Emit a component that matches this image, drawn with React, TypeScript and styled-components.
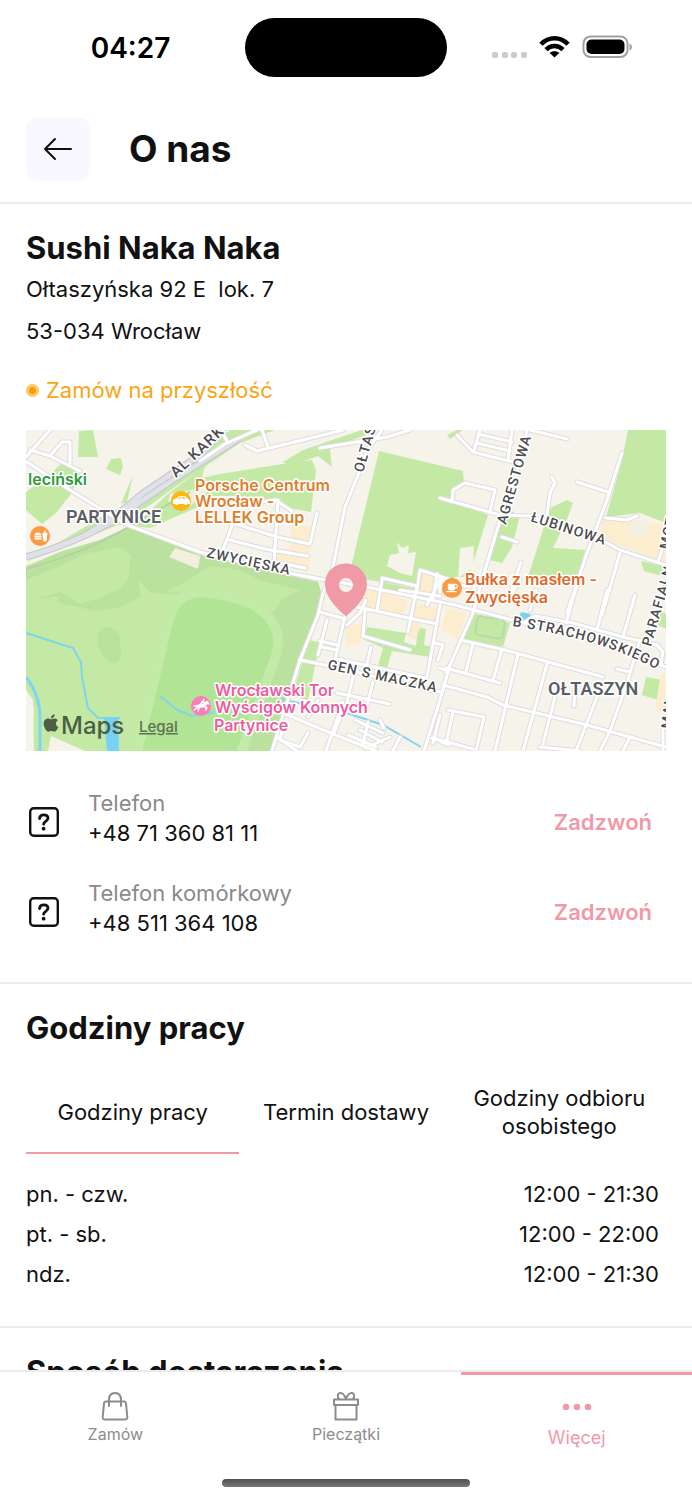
import React, { useState } from 'react';
import styled, { createGlobalStyle } from 'styled-components';
import { FaApple } from 'react-icons/fa';
import { FaBurger, FaMugSaucer } from 'react-icons/fa6';

const contacts = [
    { id: 'phone', label: 'Telefon', number: '+48 71 360 81 11' },
    { id: 'mobile', label: 'Telefon komórkowy', number: '+48 511 364 108' },
];

const hourTabs = ['Godziny pracy', 'Termin dostawy', 'Godziny odbioru osobistego'];

const hours = [
    { days: 'pn. - czw.', time: '12:00 - 21:30' },
    { days: 'pt. - sb.', time: '12:00 - 22:00' },
    { days: 'ndz.', time: '12:00 - 21:30' },
];

const App = () => {
    const [activeTab, setActiveTab] = useState(0);

    return (
        <>
            <GlobalStyle />
            <Screen>
                <StatusBar>
                    <StatusSide>
                        <Clock>04:27</Clock>
                    </StatusSide>
                    <Island />
                    <StatusSide>
                        <StatusIcons />
                    </StatusSide>
                </StatusBar>
                <Header>
                    <BackButton type="button" aria-label="Wstecz">
                        <svg width="30" height="24" viewBox="0 0 30 24" fill="none" stroke="#111" strokeWidth="2" strokeLinecap="round" strokeLinejoin="round">
                            <path d="M28 12H2M12 2L2 12L12 22" />
                        </svg>
                    </BackButton>
                    <PageTitle>O nas</PageTitle>
                </Header>
                <Content>
                    <Section>
                        <SectionTitle>Sushi Naka Naka</SectionTitle>
                        <AddressLine>{'Ołtaszyńska 92 E  lok. 7'}</AddressLine>
                        <AddressLine>53-034 Wrocław</AddressLine>
                        <Availability>
                            <Dot />
                            Zamów na przyszłość
                        </Availability>
                        <MapView />
                        <ContactList>
                            {contacts.map((contact) => (
                                <ContactRow key={contact.id}>
                                    <QuestionIcon />
                                    <ContactText>
                                        <ContactLabel>{contact.label}</ContactLabel>
                                        <span>{contact.number}</span>
                                    </ContactText>
                                    <CallLink href={`tel:${contact.number.replace(/ /g, '')}`}>Zadzwoń</CallLink>
                                </ContactRow>
                            ))}
                        </ContactList>
                    </Section>
                    <Section>
                        <SectionTitle>Godziny pracy</SectionTitle>
                        <Tabs role="tablist">
                            {hourTabs.map((tab, index) => (
                                <Tab
                                    key={tab}
                                    type="button"
                                    role="tab"
                                    aria-selected={index === activeTab}
                                    $active={index === activeTab}
                                    onClick={() => setActiveTab(index)}
                                >
                                    {tab}
                                </Tab>
                            ))}
                        </Tabs>
                        <HoursTable>
                            <tbody>
                                {hours.map((row) => (
                                    <tr key={row.days}>
                                        <th scope="row">{row.days}</th>
                                        <td>{row.time}</td>
                                    </tr>
                                ))}
                            </tbody>
                        </HoursTable>
                    </Section>
                    <Section>
                        <SectionTitle>Sposób dostarczenia</SectionTitle>
                    </Section>
                </Content>
                <BottomBar>
                    <NavList>
                        <NavLink href="#zamow">
                            <svg width="28" height="30" viewBox="0 0 28 30" fill="none" stroke="currentColor" strokeWidth="2" strokeLinecap="round" strokeLinejoin="round">
                                <path d="M5 10.500H23Q24.800 10.500 25 12.300L26.300 26Q26.500 28.500 24 28.500H4Q1.500 28.500 1.700 26L3 12.300Q3.200 10.500 5 10.500Z" />
                                <path d="M8 15V9C8 4.500 10.200 2 14 2S20 4.500 20 9V15" />
                            </svg>
                            Zamów
                        </NavLink>
                        <NavLink href="#pieczatki">
                            <svg width="28" height="30" viewBox="0 0 28 30" fill="none" stroke="currentColor" strokeWidth="2" strokeLinecap="round" strokeLinejoin="round">
                                <path d="M2 8.500H26V14H2ZM3.500 14V28.500H24.500V14" />
                                <path d="M14 8C12.500 4 10.500 2 8.500 2C5.500 2 5 6 7 8M14 8C15.500 4 17.500 2 19.500 2C22.500 2 23 6 21 8" />
                            </svg>
                            Pieczątki
                        </NavLink>
                        <NavLink href="#wiecej" $active aria-current="page">
                            <svg width="30" height="30" viewBox="0 0 30 30" fill="currentColor">
                                <circle cx="4" cy="16" r="3.300" />
                                <circle cx="15" cy="16" r="3.300" />
                                <circle cx="26" cy="16" r="3.300" />
                            </svg>
                            Więcej
                        </NavLink>
                    </NavList>
                    <HomeIndicator />
                </BottomBar>
            </Screen>
        </>
    );
};

export default App;

const StatusIcons = () => (
    <svg width="142" height="26" viewBox="0 0 142 26">
        <g fill="#cbcbcb">
            <rect x="1" y="17" width="6" height="6" rx="2" />
            <rect x="11" y="17" width="6" height="6" rx="2" />
            <rect x="20" y="17" width="6" height="6" rx="2" />
            <rect x="30" y="17" width="6" height="6" rx="2" />
        </g>
        <g fill="none" stroke="#000" strokeWidth="4.600">
            <path d="M50 9.300C57.500 1.300 69.500 1.300 77 9.300" />
            <path d="M55 14.600C60 9.800 67 9.800 72 14.600" />
        </g>
        <path d="M63.500 22.500L58.500 17.800C61.500 15.600 65.500 15.600 68.500 17.800Z" />
        <rect x="92.500" y="1.500" width="44" height="20.500" rx="7" fill="none" stroke="#a0a0a0" strokeWidth="2" />
        <rect x="95.500" y="4.500" width="38" height="14.500" rx="5" />
        <path d="M138.500 8.500C141.800 9.700 141.800 14.300 138.500 15.500Z" fill="#a0a0a0" />
    </svg>
);

const QuestionIcon = () => (
    <svg width="36" height="36" viewBox="0 0 36 36" fill="none" stroke="#111" strokeWidth="2.400" strokeLinecap="round" strokeLinejoin="round">
        <rect x="4.200" y="4.200" width="27.600" height="27.600" rx="3.500" />
        <path d="M13.500 14.500C13.800 11.900 15.700 10.900 17.800 10.900C20.400 10.900 22 12.300 22 14.300C22 17.300 17.600 17.300 17.600 20.200" strokeWidth="2.800" />
        <circle cx="17.600" cy="24.700" r="1.900" fill="#111" stroke="none" />
    </svg>
);

const parks = [
    'M26 566L60 552L100 540L128 527L200 555L300 578L318 582L322 596L318 612L300 660L272 751H85L51 736L48 751H34L33 700L26 690Z',
    'M26 562L128 521L175 487L240 443L275 430H222L205 452L180 470L150 487L128 503L100 518Z',
    'M121 504L133 475L127 502Z',
    'M79 431L93 430L98 457L78 457Z',
    'M111 459L121 458L123 467L120 475L106 469Z',
    'M26 492L50 474L62 463L79 470L81 477L75 484L70 496L66 500L56 513L42 524L26 510Z',
    'M134 526L168 494L205 466L202 478L220 474L283 464L312 460L316 470L311 512L290 508L280 500L240 496L210 496L198 507L150 528Z',
    'M283 462L303 450L350 434L362 430L376 431L330 449L332 467L318 456L290 466Z',
    'M379 451L463 471L464 483L453 489L450 500L488 515L474 560L468 577L455 577L440 592L352 577V563Z',
    'M447 435L457 430H463L450 439Z',
    'M628 430H666V523L640 513L606 517L622 460Z',
    'M501 507L520 515L512 547L502 563L490 560Z',
    'M550 508L567 500L573 503L568 517L553 548L585 550L576 585H545L528 577Z',
    'M641 561L666 567V577L644 571Z',
    'M472 613L510 623L503 647L460 640Z',
    'M646 677L662 680L658 700L642 695Z',
    'M660 612L666 613V629L658 625Z',
    'M308 640L320 642L308 700L292 696L303 660Z',
    'M367 627L406 633L404 642L416 646L418 627L426 629L424 645L432 647L430 657L392 651L387 668L378 666L383 648L363 639Z',
    'M380 582L423 590L421 597L383 592Z',
    'M420 676L427 677L425 684L415 683Z',
];

const woods = [
    'M26 567L60 552L100 540L128 527L200 555L300 578L318 582L322 596L318 612L300 660L272 751H240L283 640L265 612L230 600L150 592L138 580L141 597L118 608L95 611L57 602L60 596L26 600Z',
    'M99 632C106 622 117 629 120 637L121 656C119 666 111 664 106 659C99 652 96 641 99 632Z',
];

const glades = [
    'M26 580L60 566L85 554L120 547L131 555L128 580L118 590L100 598L80 604L60 592L26 602Z',
    'M165 592L180 585L210 566L240 570L262 581L300 590L283 598L274 612L240 600L200 592Z',
];

const districts = [
    'M292 522L315 528L310 550L309 572L274 564L280 548L290 548Z',
    'M364 586L407 600L403 617L360 607Z',
    'M412 603L440 608L436 623L410 616Z',
    'M345 627L363 623L360 643L346 646Z',
    'M447 608L468 612L457 638L441 629Z',
    'M422 573L450 579L446 597L420 592Z',
    'M602 519L625 516L637 523L666 524V563L627 548L600 538Z',
    'M661 672L666 675V714L655 710Z',
    'M410 622L422 624L415 640L406 635Z',
];

const roads = [
    'M26 457L50 430M27 462L70 490L127 525L200 552L283 572L320 579L367 587L455 605L520 622L590 640L650 661L666 667',
    'M30 450L50 456L62 442H70V463M50 456L80 471',
    'M200 461L225 444L275 422M222 432L228 443M245 445L257 451L303 440L343 430M262 430L268 447',
    'M223 550L233 523L277 537L310 544L317 513M278 500L274 563M230 540L265 549L308 556M232 523L242 505L275 500L292 511M280 563L305 568',
    'M320 448L387 437L410 430M382 430L366 452L358 475L345 507L333 567L323 593L318 615L300 660L272 751',
    'M457 435L473 452L513 462M480 430L474 451M512 430L508 460M478 434L512 442M477 443L510 451M527 430L520 463L500 520L482 580L473 613L450 665L440 700L424 751',
    'M530 430L567 439M452 502L453 490L465 483L495 490L490 511M440 498L500 515L530 516L600 539L620 550L666 565M502 537L517 542',
    'M547 515L550 493L555 483L552 477M622 453L607 500L587 553L567 613M577 482L608 492M605 518L627 520L637 516M620 553L602 615M521 562L510 595M635 595L623 637M665 540L658 562M577 585L566 623M607 590L597 630',
    'M525 622L535 616L573 623L623 637L657 645L663 652L661 665M357 607L437 624M382 580L377 610M382 578L417 586L413 607L408 632M400 590L440 596M440 580L427 605M440 580L470 587M440 577V592',
    'M420 570L448 579M420 570L417 590M437 574L433 598M345 616L335 660M320 612L345 619M347 625L360 613L366 600M365 610L363 636L410 650M320 641L337 645M327 620L318 655M322 647L336 650M371 647L367 664M440 605L427 677',
    'M300 660L335 667L430 690L440 692M337 659L425 678M337 693L390 704M353 677L347 702M373 682L366 710M343 702L326 751M318 700L308 717M283 713L333 734L376 751M355 720L383 733M360 730L382 742M368 722L363 745M380 720L384 728M348 735L376 747',
    'M283 726L280 740L300 747L308 733M278 738L297 751M333 735L345 707M400 737L393 751M366 748L390 737',
    'M460 640L505 650L603 677M446 668L500 683M473 644L466 671M502 649L493 680M518 654L495 751M547 664L523 751M443 685L487 697L503 705L587 725L666 747M555 697L543 744M597 697L576 751M640 640L627 683L610 731L600 751M575 690L574 706',
    'M448 710L484 717L476 751M453 712L446 744M440 740L473 749M540 747L580 751M617 669L630 672M630 737L623 751M663 730V751M435 643L443 645L438 660M433 738L448 745M440 715L433 743M440 668L449 671M450 665L446 672',
    'M432 738L452 743M520 580L507 602M536 590L530 610',
];

const railway = 'M26 557Q95 537 133 507L173 480L210 457L240 438M80 538Q110 522 143 493L173 473L200 455L226 428';

const streetLabels = [
    { text: 'AL KARKO', x: 176, y: 478, angle: -43, size: 15 },
    { text: 'OŁTASZ', x: 363, y: 473, angle: -74, size: 14 },
    { text: 'AGRESTOWA', x: 506, y: 525, angle: -74, size: 14 },
    { text: 'ŁUBINOWA', x: 530, y: 521, angle: 18, size: 14 },
    { text: 'ZWYCIĘSKA', x: 206, y: 557, angle: 12, size: 14 },
    { text: 'GEN S MACZKA', x: 327, y: 669, angle: 12, size: 14 },
    { text: 'PARAFIALN', x: 651, y: 647, angle: -74, size: 14 },
    { text: 'MOT', x: 669, y: 550, angle: -78, size: 14 },
    { text: 'MAL', x: 671, y: 729, angle: -84, size: 14 },
];

const placeLabels = [
    { text: 'leciński', x: 28, y: 485, color: '#2f9a3c' },
    { text: 'Porsche Centrum', x: 195, y: 491, color: '#dc802c' },
    { text: 'Wrocław -', x: 195, y: 507, color: '#dc802c' },
    { text: 'LELLEK Group', x: 195, y: 523, color: '#dc802c' },
    { text: 'Bułka z masłem -', x: 465, y: 585, color: '#de6a2c' },
    { text: 'Zwycięska', x: 465, y: 603, color: '#de6a2c' },
    { text: 'Wrocławski Tor', x: 215, y: 696, color: '#ee5c9f' },
    { text: 'Wyścigów Konnych', x: 215, y: 713, color: '#ee5c9f' },
    { text: 'Partynice', x: 214, y: 731, color: '#ee5c9f' },
];

const MapView = () => (
    <MapSvg viewBox="26 430 640 321" role="img" aria-label="Mapa okolicy restauracji">
        <rect x="26" y="430" width="640" height="321" fill="#f6f3eb" />
        <g fill="#c3e9a5">
            {parks.map((d) => (
                <path key={d} d={d} />
            ))}
        </g>
        <g fill="#bbe19e">
            {woods.map((d) => (
                <path key={d} d={d} />
            ))}
        </g>
        <g fill="#c3e9a5">
            {glades.map((d) => (
                <path key={d} d={d} />
            ))}
        </g>
        <g fill="#fdedcf">
            {districts.map((d) => (
                <path key={d} d={d} />
            ))}
        </g>
        <path d="M175 548L200 556L198 569L169 557Z" fill="#f3eedf" />
        <path d="M168 501L170 494L192 490L215 486L190 506Z" fill="#f3eedf" />
        <path d="M387 566L390 555L399 553L397 542L402 548L409 545L408 553L416 552L412 576L400 573Z" fill="#f6f3eb" />
        <path d="M629 520L648 521L645 538L630 537Z" fill="#f3efe2" />
        <path d="M460 548L474 546L473 568L458 578Z" fill="#f6f3eb" />
        <path d="M26 690L34 708L33 726L26 728Z" fill="#f6f3eb" />
        <path d="M136 756L168 622Q174 594 200 592Q258 597 272 622Q282 636 276 656L240 756Z" fill="#b1e495" stroke="#c3eba8" strokeWidth="10" />
        <rect x="476" y="618" width="28" height="19" rx="4" transform="rotate(10 490 628)" fill="none" stroke="#b9d8ac" strokeWidth="2" />
        <g fill="none" stroke="#7ed5ee" strokeWidth="2">
            <path d="M26 633L73 648L81 662L82 677L88 708L98 718H120" />
            <path d="M160 696L177 710L192 716L215 712M280 699L350 714L383 725L421 747" />
            <path d="M26 677Q40 695 40 718V751" strokeWidth="3" />
        </g>
        <path d="M104 718H118L119 751H107Z" fill="#76d3f5" />
        <path d="M521 612L531 614L527 621L519 618Z" fill="#76d3f5" />
        <g fill="none" strokeLinejoin="round">
            <path d={railway} stroke="#c3c6cf" strokeWidth="7" />
            <path d={railway} stroke="#dfe1e6" strokeWidth="5" />
            <path d="M26 569Q90 551 130 526L190 492" stroke="#b3d3a0" strokeWidth="2" />
        </g>
        <g fill="none" strokeLinecap="round" strokeLinejoin="round">
            {roads.map((d) => (
                <path key={d} d={d} stroke="#dddde1" strokeWidth="5" />
            ))}
            {roads.map((d) => (
                <path key={d} d={d} stroke="#fff" strokeWidth="3" />
            ))}
        </g>
        {streetLabels.map(({ text, x, y, angle, size }) => (
            <StreetText key={text} x={x} y={y} fontSize={size} transform={`rotate(${angle} ${x} ${y})`}>
                {text}
            </StreetText>
        ))}
        <path id="strachowskiego" d="M512 626Q590 637 640 661L690 685" fill="none" />
        <StreetText fontSize="14">
            <textPath href="#strachowskiego">B STRACHOWSKIEGO</textPath>
        </StreetText>
        <DistrictText x="66" y="523">PARTYNICE</DistrictText>
        <DistrictText x="548" y="695">OŁTASZYN</DistrictText>
        {placeLabels.map(({ text, x, y, color }) => (
            <PlaceText key={text} x={x} y={y} fill={color}>
                {text}
            </PlaceText>
        ))}
        <circle cx="181" cy="501" r="10" fill="#fcb813" />
        <path
            fillRule="evenodd"
            d="M173 501Q173 499 176 498.500Q178 496 180 496H184Q186 496 188 499Q190 499.500 190 502V504H187.500A2 2 0 0 1 184 504H178.500A2 2 0 0 1 175 504H173ZM177.500 498.800H180.500V497.200Q178.500 497.200 177.500 498.800ZM181.800 498.800H186Q185 497.200 183.500 497.200H181.800Z"
            fill="#fff"
        />
        <circle cx="40" cy="536" r="10" fill="#fb9a42" />
        <FaBurger x="34" y="532" size="8" color="#fff" />
        <path d="M43 533H47L46 541H43.500ZM45 533V530" fill="#fff" stroke="#fff" />
        <circle cx="452" cy="588" r="10" fill="#fb9a42" />
        <FaMugSaucer x="446" y="582" size="12" color="#fff" />
        <circle cx="201" cy="706" r="10" fill="#fb7dba" />
        <g fill="none" stroke="#fff" strokeLinecap="round" strokeLinejoin="round">
            <path d="M197.500 706.500L203.500 705.500L207 702.500" strokeWidth="3.500" />
            <path d="M207 702.500L209 704M197 706L194 706M197.500 707.500L194 710M199 708L198 711M204 706.500L207 708L205.500 710" strokeWidth="1.400" />
            <path d="M200.500 704.500L202.500 701.500L204.500 703" strokeWidth="1.800" />
            <circle cx="203.500" cy="700" r="0.700" />
        </g>
        <path
            fillRule="evenodd"
            d="M346 616.500C343 613 325 600 325 584C325 572 334.500 563.500 346 563.500S367 572 367 584C367 600 349 613 346 616.500ZM346 578A7 7 0 1 0 346 592A7 7 0 1 0 346 578Z"
            fill="#f09aa8"
        />
        <FaApple x="41" y="713" size="20" color="#4c5e45" />
        <MapsText x="61" y="734">Maps</MapsText>
        <a href="#legal">
            <LegalText x="139" y="732">Legal</LegalText>
        </a>
    </MapSvg>
);

const GlobalStyle = createGlobalStyle`
    * {
        box-sizing: border-box;
    }

    body {
        margin: 0;
        background: #fff;
        color: #111;
        font-family: Inter, 'Liberation Sans', sans-serif;
        font-size: 22px;
    }

    h1, h2, p {
        margin: 0;
    }

    button {
        font: inherit;
        color: inherit;
        border: 0;
        cursor: pointer;
    }

    a {
        text-decoration: none;
    }
`;

const Screen = styled.div`
    display: flex;
    flex-direction: column;
    height: 100vh;
`;

const StatusBar = styled.div`
    display: grid;
    grid-template-columns: 1fr 202px 1fr;
    padding-top: 18px;
    flex-shrink: 0;
`;

const StatusSide = styled.div`
    display: flex;
    align-items: center;
    justify-content: center;

    &:first-child {
        padding-left: 16px;
    }

    &:last-child {
        padding-right: 16px;
    }
`;

const Clock = styled.span`
    font-size: 28px;
    font-weight: 600;
    color: #000;
`;

const Island = styled.div`
    height: 59px;
    border-radius: 30px;
    background: #000;
`;

const Header = styled.header`
    display: flex;
    align-items: center;
    gap: 39px;
    flex-shrink: 0;
    padding: 40px 26px 21px;
    border-bottom: 2px solid #ebebeb;
`;

const BackButton = styled.button`
    display: flex;
    align-items: center;
    justify-content: center;
    width: 64px;
    height: 64px;
    padding: 0;
    border-radius: 12px;
    background: #f9f8fe;
`;

const PageTitle = styled.h1`
    font-size: 37px;
    line-height: 48px;
    font-weight: 700;
`;

const Content = styled.main`
    flex: 1;
    min-height: 0;
    overflow-y: auto;
    scrollbar-width: none;
`;

const Section = styled.section`
    padding: 24px 26px 32px;

    & + & {
        border-top: 2px solid #ebebeb;
    }
`;

const SectionTitle = styled.h2`
    font-size: 31px;
    line-height: 40px;
    font-weight: 700;
`;

const AddressLine = styled.p`
    line-height: 42px;
    white-space: pre;
`;

const Availability = styled.p`
    display: flex;
    align-items: center;
    gap: 7px;
    margin: 17px 0 19px;
    line-height: 42px;
    color: #f7a614;
`;

const Dot = styled.span`
    width: 13px;
    height: 13px;
    border: 3px solid #fdc766;
    border-radius: 50%;
    background: #f99d0c;
`;

const MapSvg = styled.svg`
    display: block;
    width: 100%;
    height: auto;
    font-family: Inter, 'Liberation Sans', sans-serif;
`;

const MapLabel = styled.text`
    stroke: #fff;
    stroke-width: 3px;
    stroke-linejoin: round;
    paint-order: stroke;
`;

const StreetText = styled(MapLabel)`
    fill: #4b4b50;
    font-family: Roboto, sans-serif;
    font-weight: 500;
    letter-spacing: 1px;
`;

const DistrictText = styled(MapLabel)`
    fill: #5b5e66;
    font-family: Roboto, sans-serif;
    font-size: 18px;
    font-weight: 600;
`;

const PlaceText = styled(MapLabel)`
    font-size: 16px;
    font-weight: 600;
`;

const MapsText = styled.text`
    fill: #4c5e45;
    font-size: 24px;
    font-weight: 500;
`;

const LegalText = styled.text`
    fill: #5c7352;
    font-size: 15px;
    font-weight: 500;
    text-decoration: underline;
`;

const ContactList = styled.div`
    display: flex;
    flex-direction: column;
    gap: 22px;
    padding: 37px 14px 4px 0;
`;

const ContactRow = styled.div`
    display: flex;
    align-items: center;
    gap: 26px;
`;

const ContactText = styled.div`
    display: flex;
    flex: 1;
    flex-direction: column;
    padding-bottom: 8px;
    line-height: 30px;
`;

const ContactLabel = styled.span`
    color: #8a8a8a;
`;

const CallLink = styled.a`
    color: #f09aa8;
    font-weight: 600;
`;

const Tabs = styled.div`
    display: grid;
    grid-template-columns: repeat(3, 1fr);
    margin: 24px 0 20px;
`;

const Tab = styled.button<{ $active: boolean }>`
    min-height: 82px;
    padding: 0 12px;
    background: none;
    border-bottom: 2px solid ${({ $active }) => ($active ? '#f09aa8' : 'transparent')};
    line-height: 28px;
`;

const HoursTable = styled.table`
    width: 100%;
    border-collapse: collapse;

    th,
    td {
        height: 40px;
        padding: 0;
        font-weight: 400;
        text-align: left;
    }

    td {
        padding-right: 7px;
        text-align: right;
    }
`;

const BottomBar = styled.footer`
    display: flex;
    flex-direction: column;
    align-items: center;
    justify-content: space-between;
    flex-shrink: 0;
    height: 130px;
    padding-bottom: 13px;
    border-top: 2px solid #ebebeb;
`;

const NavList = styled.nav`
    display: grid;
    grid-template-columns: repeat(3, 1fr);
    width: 100%;
`;

const NavLink = styled.a<{ $active?: boolean }>`
    display: flex;
    flex-direction: column;
    align-items: center;
    gap: ${({ $active }) => ($active ? '5px' : '1px')};
    padding-top: ${({ $active }) => ($active ? '16px' : '19px')};
    border-top: ${({ $active }) => ($active ? '3px solid #f09aa8' : '0')};
    color: ${({ $active }) => ($active ? '#f09aa8' : '#8c8c8c')};
    font-size: ${({ $active }) => ($active ? '18px' : '16px')};
    line-height: 24px;
`;

const HomeIndicator = styled.div`
    width: 248px;
    height: 8px;
    border-radius: 4px;
    background: linear-gradient(#4f504f, #777);
`;
